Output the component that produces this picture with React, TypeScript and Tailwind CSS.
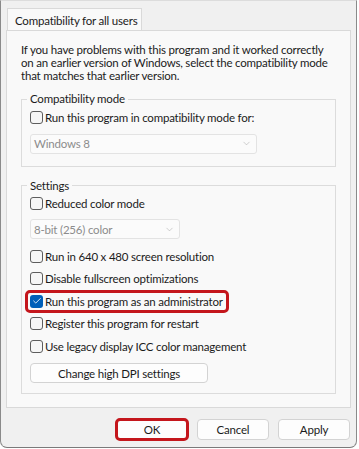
import { Check, ChevronDown } from "lucide-react";

type BoxProps = {
  label: string;
  checked?: boolean;
};

function Box({ checked }: { checked?: boolean }) {
  if (checked) {
    return (
      <span className="flex h-[13px] w-[13px] shrink-0 items-center justify-center rounded-[3px] bg-[#005fb8]">
        <Check size={10} strokeWidth={2} className="text-white" />
      </span>
    );
  }
  return (
    <span className="h-[13px] w-[13px] shrink-0 rounded-[3px] border border-[#5d5d5d] bg-[#f6f6f6]" />
  );
}

function CheckRow({ label, checked }: BoxProps) {
  return (
    <div className="flex h-[22.5px] items-center gap-[2px]">
      <Box checked={checked} />
      <span className="whitespace-nowrap">{label}</span>
    </div>
  );
}

function Select({ value, width }: { value: string; width: string }) {
  return (
    <div
      className={`flex h-[20px] items-center justify-between rounded-[3px] border border-[#e3e3e3] bg-[#fbfbfb] pl-[3px] pr-[4px] text-[#8c8c8c] ${width}`}
    >
      <span>{value}</span>
      <ChevronDown size={11} strokeWidth={1} className="text-[#9a9a9a]" />
    </div>
  );
}

function Button({ label, red }: { label: string; red?: boolean }) {
  return (
    <button
      className={`h-[21px] w-[72px] rounded-[4px] border border-[#d3d3d3] bg-[#fdfdfd] text-[#1b1b1b] ${
        red ? "outline-3 outline-offset-[-2px] outline-[#c4161c]" : ""
      }`}
    >
      {label}
    </button>
  );
}

export default function App() {
  return (
    <div className="h-[449px] w-[359px] bg-white font-['Lato',sans-serif] text-[11.5px] leading-[13px] tracking-[-0.2px] text-[#1b1b1b]">
      <div className="flex h-[448px] w-[357px] flex-col rounded-b-[7px] border-x border-b border-t border-x-[#8a8a8a] border-b-[#7a7a7a] border-t-[#dcdcdc] bg-[#f0f0f0]">
        {/* Tabs */}
        <div className="flex pl-[6px] pt-[7px]">
          <div className="flex h-[23px] w-[135px] items-center whitespace-nowrap border border-b-0 border-[#d9d9d9] bg-[#f9f9f9] px-[7px]">
            Compatibility for all users
          </div>
        </div>

        {/* Panel */}
        <div className="mx-[5px] -mt-px h-[378px] border border-[#d9d9d9] bg-[#f9f9f9] px-[14px] pt-[12px]">
          <p>
            If you have problems with this program and it worked correctly
            on an earlier version of Windows, select the compatibility mode
            that matches that earlier version.
          </p>

          <fieldset className="mt-[10px] w-[315px] border border-[#dcdcdc] px-[8px] pb-[12px]">
            <legend className="-ml-[3px] px-[3px] leading-[14px]">Compatibility mode</legend>
            <CheckRow label="Run this program in compatibility mode for:" />
            <div className="mt-[5px]">
              <Select value="Windows 8" width="w-[227px]" />
            </div>
          </fieldset>

          <fieldset className="mt-[12px] w-[315px] border border-[#dcdcdc] px-[8px] pb-[10px]">
            <legend className="-ml-[3px] px-[3px] leading-[14px]">Settings</legend>
            <CheckRow label="Reduced color mode" />
            <div className="mt-[4px]">
              <Select value="8-bit (256) color" width="w-[150px]" />
            </div>
            <div className="mt-[6px]">
              <CheckRow label="Run in 640 x 480 screen resolution" />
              <CheckRow label="Disable fullscreen optimizations" />
              <div className="flex h-[22.5px] items-center">
                <div className="-ml-[2px] flex h-[17px] items-center gap-[2px] rounded-[2px] pl-[2px] pr-[3px] outline-3 outline-[#c4161c]">
                  <Box checked />
                  <span className="whitespace-nowrap">Run this program as an administrator</span>
                </div>
              </div>
              <CheckRow label="Register this program for restart" />
              <CheckRow label="Use legacy display ICC color management" />
            </div>
            <button className="mt-[5.5px] h-[20px] w-[178px] rounded-[4px] border border-[#d3d3d3] bg-[#fdfdfd]">
              Change high DPI settings
            </button>
          </fieldset>
        </div>

        {/* Dialog buttons */}
        <div className="mt-[11px] flex justify-end gap-[9px] pr-[6px]">
          <Button label="OK" red />
          <Button label="Cancel" />
          <Button label="Apply" />
        </div>
      </div>
    </div>
  );
}
